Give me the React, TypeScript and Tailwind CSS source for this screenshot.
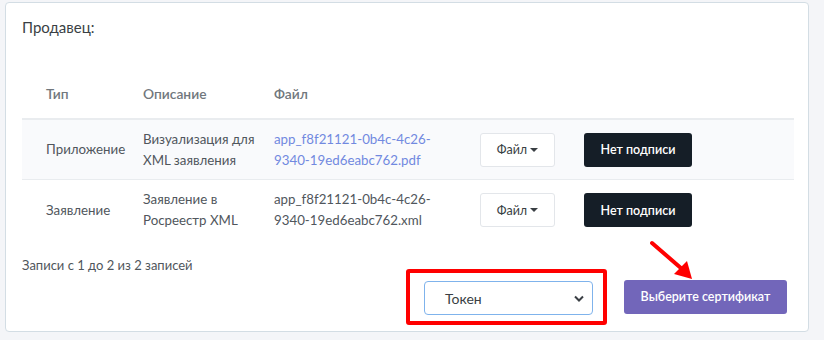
import React from 'react';

const rows = [
  {
    type: 'Приложение',
    desc: ['Визуализация для', 'XML заявления'],
    file: ['app_f8f21121-0b4c-4c26-', '9340-19ed6eabc762.pdf'],
    link: true,
  },
  {
    type: 'Заявление',
    desc: ['Заявление в', 'Росреестр XML'],
    file: ['app_f8f21121-0b4c-4c26-', '9340-19ed6eabc762.xml'],
    link: false,
  },
];

const App = () => {
  return (
    <div
      className="w-[824px] h-[340px] bg-[#f4f5f8] pt-[2px] pl-[5px] overflow-hidden relative"
      style={{ fontFamily: 'Lato, "Noto Sans", sans-serif' }}
    >
      <div className="w-[804px] h-[330px] bg-white border border-[#d3dde4] rounded-[4px] px-4 pt-[12px]">
        {/* Title */}
        <h4 className="text-[15px] leading-[24px] text-[#3a3f44]">Продавец:</h4>

        {/* Table */}
        <div className="mt-[31px] w-[772px] text-[13.3px] text-[#50565c]">
          <div className="flex items-center h-[50px] border-b-2 border-[#e9ecef] font-semibold text-[#71777d] text-[13.8px]">
            <div className="w-[121px] pl-6">Тип</div>
            <div className="w-[131px]">Описание</div>
            <div className="w-[206px]">Файл</div>
          </div>
          {rows.map((row, i) => (
            <div
              key={row.type}
              className={`flex items-center h-[60px] leading-[21px] ${
                i === 0 ? 'bg-[#f9fafc] border-b border-[#e9ecef]' : ''
              }`}
            >
              <div className="w-[121px] pl-6">{row.type}</div>
              <div className="w-[131px]">
                {row.desc[0]}
                <br />
                {row.desc[1]}
              </div>
              <div className={`w-[206px] ${row.link ? 'text-[#7189e0]' : ''}`}>
                {row.file[0]}
                <br />
                {row.file[1]}
              </div>
              <div className="w-[104px]">
                <button className="w-[75px] h-[34px] bg-white border border-[#e3e6ea] rounded-[3px] text-[12.5px] text-[#3a3f44] flex items-center justify-center gap-[3px]">
                  Файл
                  <span className="inline-block w-0 h-0 border-l-[4px] border-r-[4px] border-t-[4px] border-l-transparent border-r-transparent border-t-[#3a3f44]" />
                </button>
              </div>
              <button className="w-[108px] h-[34px] bg-[#151e27] rounded-[3px] text-white text-[12.5px] font-semibold">
                Нет подписи
              </button>
            </div>
          ))}
        </div>

        {/* Info */}
        <div className="mt-[17px] text-[13px] leading-[16px] text-[#50565c]">
          Записи с 1 до 2 из 2 записей
        </div>

        {/* Actions */}
        <div className="flex items-center justify-end pr-[5px] gap-[17px] -mt-[4px]">
          <div className="w-[201px] h-[56px] border-4 border-[#ff0000] rounded-[3px] pl-[14px] pt-[8px]">
            <div className="w-[169px] h-[34px] border border-[#7fb3ec] rounded-[4px] flex items-center justify-between pl-[20px] pr-[8px] text-[14px] text-[#3a3f44]">
              <span>Токен</span>
              <svg width="10" height="7" viewBox="0 0 10 7">
                <path d="M1 1.5 L5 5.5 L9 1.5" fill="none" stroke="#3a3f44" strokeWidth="2" />
              </svg>
            </div>
          </div>
          <button className="w-[163px] h-[34px] bg-[#7266ba] rounded-[3px] text-white text-[12.5px] font-semibold">
            Выберите сертификат
          </button>
        </div>
      </div>

      {/* Red arrow annotation */}
      <svg className="absolute left-0 top-0 pointer-events-none" width="824" height="340">
        <line x1="652" y1="243" x2="682" y2="269" stroke="#ff0000" strokeWidth="4" strokeLinecap="round" />
        <polygon points="692,279 674,274 687,261" fill="#ff0000" />
      </svg>
    </div>
  );
};

export default App;
